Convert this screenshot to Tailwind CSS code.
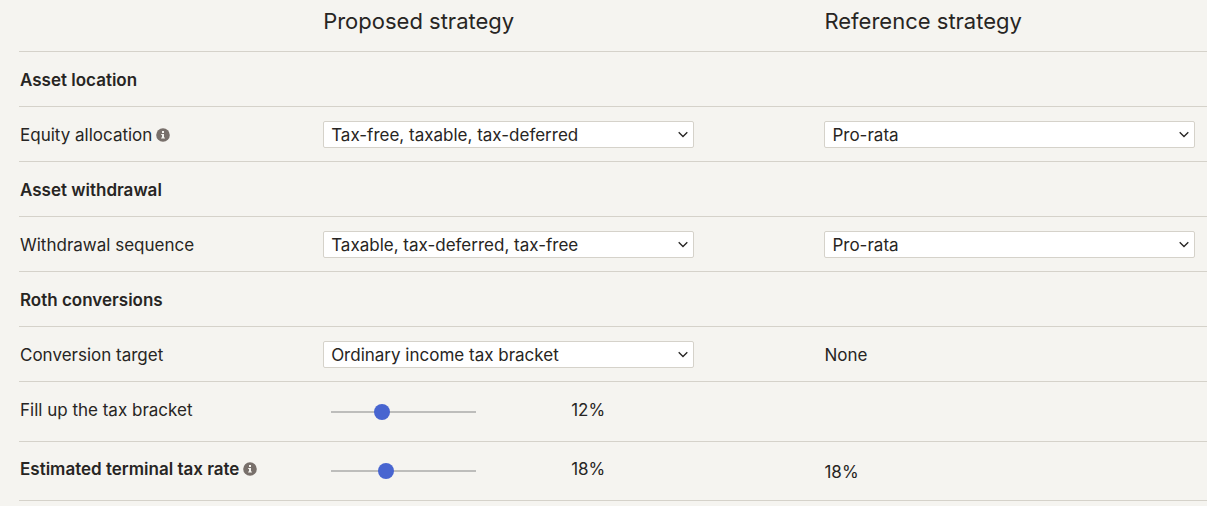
<!DOCTYPE html>
<html lang="en">
<head>
    <meta charset="UTF-8">
    <meta name="viewport" content="width=device-width, initial-scale=1.0">
    <title>Tax strategy</title>
    <script src="https://cdn.jsdelivr.net/npm/@tailwindcss/browser@4"></script>
</head>
<body class="min-h-screen bg-[#f5f4f0] pl-[19px] font-['Inter',sans-serif] text-[17px] leading-6 text-[#272523]">
    <table class="w-full table-fixed border-collapse text-left [&_tbody_td]:pt-0.5 [&_tbody_th]:pt-0.5 [&_tbody_th]:pl-px">
        <colgroup>
            <col class="w-[25.6%]">
            <col class="w-[42.2%]">
            <col class="w-[32.2%]">
        </colgroup>
        <thead>
            <tr class="h-[51px] border-b border-[#d5d2ca] text-[22px]">
                <td></td>
                <th scope="col" class="pb-2 font-normal">Proposed strategy</th>
                <th scope="col" class="pb-2 font-normal">Reference strategy</th>
            </tr>
        </thead>
        <tbody>
            <tr class="h-[55px] border-b border-[#d5d2ca]">
                <th scope="rowgroup" colspan="3" class="font-semibold">Asset location</th>
            </tr>
            <tr class="h-[55px] border-b border-[#d5d2ca]">
                <th scope="row" class="font-normal">
                    <div class="flex items-center gap-1">
                        <label for="equity">Equity allocation</label>
                        <button type="button" aria-label="About equity allocation">
                            <svg class="size-[14px]" viewBox="0 0 14 14"><circle cx="7" cy="7" r="6.8" fill="#78706b"/><path d="M6 3h2v2H6zM5.2 6H8v3.6h.9v1H5.1v-1H6V7h-.8z" fill="#f5f4f0"/></svg>
                        </button>
                    </div>
                </th>
                <td>
                    <div class="relative w-[74%]">
                        <select id="equity" class="block h-[27px] w-full appearance-none rounded-xs border border-[#d5d2ca] bg-white pr-8 pl-[7px]">
                            <option>Tax-free, taxable, tax-deferred</option>
                            <option>Pro-rata</option>
                        </select>
                        <svg class="pointer-events-none absolute top-2 right-1.5 size-[10px]" viewBox="0 0 10 10" fill="none" stroke="#272523" stroke-width="1.3"><path d="M.7 3.2 5 7.5l4.3-4.3"/></svg>
                    </div>
                </td>
                <td class="pr-3">
                    <div class="relative">
                        <select aria-label="Reference equity allocation" class="block h-[27px] w-full appearance-none rounded-xs border border-[#d5d2ca] bg-white pr-8 pl-[7px]">
                            <option>Pro-rata</option>
                        </select>
                        <svg class="pointer-events-none absolute top-2 right-1.5 size-[10px]" viewBox="0 0 10 10" fill="none" stroke="#272523" stroke-width="1.3"><path d="M.7 3.2 5 7.5l4.3-4.3"/></svg>
                    </div>
                </td>
            </tr>
        </tbody>
        <tbody>
            <tr class="h-[55px] border-b border-[#d5d2ca]">
                <th scope="rowgroup" colspan="3" class="font-semibold">Asset withdrawal</th>
            </tr>
            <tr class="h-[55px] border-b border-[#d5d2ca]">
                <th scope="row" class="font-normal"><label for="withdrawal">Withdrawal sequence</label></th>
                <td>
                    <div class="relative w-[74%]">
                        <select id="withdrawal" class="block h-[27px] w-full appearance-none rounded-xs border border-[#d5d2ca] bg-white pr-8 pl-[7px]">
                            <option>Taxable, tax-deferred, tax-free</option>
                            <option>Pro-rata</option>
                        </select>
                        <svg class="pointer-events-none absolute top-2 right-1.5 size-[10px]" viewBox="0 0 10 10" fill="none" stroke="#272523" stroke-width="1.3"><path d="M.7 3.2 5 7.5l4.3-4.3"/></svg>
                    </div>
                </td>
                <td class="pr-3">
                    <div class="relative">
                        <select aria-label="Reference withdrawal sequence" class="block h-[27px] w-full appearance-none rounded-xs border border-[#d5d2ca] bg-white pr-8 pl-[7px]">
                            <option>Pro-rata</option>
                        </select>
                        <svg class="pointer-events-none absolute top-2 right-1.5 size-[10px]" viewBox="0 0 10 10" fill="none" stroke="#272523" stroke-width="1.3"><path d="M.7 3.2 5 7.5l4.3-4.3"/></svg>
                    </div>
                </td>
            </tr>
        </tbody>
        <tbody>
            <tr class="h-[55px] border-b border-[#d5d2ca]">
                <th scope="rowgroup" colspan="3" class="font-semibold">Roth conversions</th>
            </tr>
            <tr class="h-[55px] border-b border-[#d5d2ca]">
                <th scope="row" class="font-normal"><label for="target">Conversion target</label></th>
                <td>
                    <div class="relative w-[74%]">
                        <select id="target" class="block h-[27px] w-full appearance-none rounded-xs border border-[#d5d2ca] bg-white pr-8 pl-[7px]">
                            <option>Ordinary income tax bracket</option>
                            <option>None</option>
                        </select>
                        <svg class="pointer-events-none absolute top-2 right-1.5 size-[10px]" viewBox="0 0 10 10" fill="none" stroke="#272523" stroke-width="1.3"><path d="M.7 3.2 5 7.5l4.3-4.3"/></svg>
                    </div>
                </td>
                <td>None</td>
            </tr>
            <tr class="h-[60px] border-b border-[#d5d2ca]">
                <th scope="row" class="pb-1 font-normal"><label for="bracket">Fill up the tax bracket</label></th>
                <td class="pb-1">
                    <div class="flex items-center pl-2">
                        <input id="bracket" type="range" min="0" max="36" value="12" class="mt-1 mr-[95px] h-4 w-[145px] appearance-none bg-transparent [&::-webkit-slider-runnable-track]:h-0.5 [&::-webkit-slider-runnable-track]:bg-[#bdbdbb] [&::-webkit-slider-thumb]:-mt-[7px] [&::-webkit-slider-thumb]:size-4 [&::-webkit-slider-thumb]:appearance-none [&::-webkit-slider-thumb]:rounded-full [&::-webkit-slider-thumb]:bg-[#4865d0]">
                        <output for="bracket">12%</output>
                    </div>
                </td>
                <td></td>
            </tr>
            <tr class="h-[59px] border-b border-[#d5d2ca]">
                <th scope="row" class="pb-1.5 font-semibold">
                    <div class="flex items-center gap-1">
                        <label for="terminal">Estimated terminal tax rate</label>
                        <button type="button" aria-label="About the terminal tax rate">
                            <svg class="size-[14px]" viewBox="0 0 14 14"><circle cx="7" cy="7" r="6.8" fill="#78706b"/><path d="M6 3h2v2H6zM5.2 6H8v3.6h.9v1H5.1v-1H6V7h-.8z" fill="#f5f4f0"/></svg>
                        </button>
                    </div>
                </th>
                <td class="pb-1.5">
                    <div class="flex items-center pl-2">
                        <input id="terminal" type="range" min="0" max="50" value="18" class="mt-1 mr-[95px] h-4 w-[145px] appearance-none bg-transparent [&::-webkit-slider-runnable-track]:h-0.5 [&::-webkit-slider-runnable-track]:bg-[#bdbdbb] [&::-webkit-slider-thumb]:-mt-[7px] [&::-webkit-slider-thumb]:size-4 [&::-webkit-slider-thumb]:appearance-none [&::-webkit-slider-thumb]:rounded-full [&::-webkit-slider-thumb]:bg-[#4865d0]">
                        <output for="terminal">18%</output>
                    </div>
                </td>
                <td>18%</td>
            </tr>
        </tbody>
    </table>
</body>
</html>
